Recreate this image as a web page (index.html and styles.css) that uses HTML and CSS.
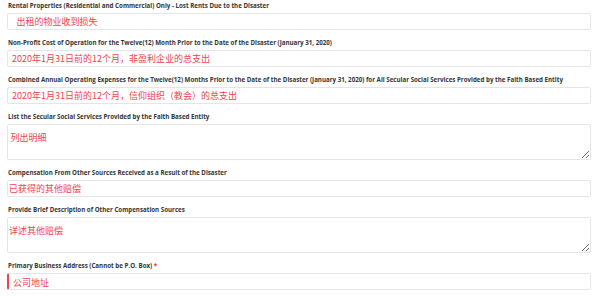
FILE: index.html
```html
<!DOCTYPE html>
<html lang="en">
<head>
    <meta charset="UTF-8">
    <meta name="viewport" content="width=device-width, initial-scale=1.0">
    <title>Disaster Relief Application</title>
    <link rel="stylesheet" href="styles.css">
</head>
<body>
    <form class="relief-form">
        <!-- Rental losses -->
        <div class="field">
            <label class="field-label" for="lost-rents">Rental Properties (Residential and Commercial) Only - Lost Rents Due to the Disaster</label>
            <input class="field-input pad-lg" id="lost-rents" type="text" placeholder="出租的物业收到损失">
        </div>

        <!-- Non-profit operation cost -->
        <div class="field">
            <label class="field-label" for="np-cost">Non-Profit Cost of Operation for the Twelve(12) Month Prior to the Date of the Disaster (January 31, 2020)</label>
            <input class="field-input pad-md" id="np-cost" type="text" placeholder="2020年1月31日前的12个月，非盈利企业的总支出">
        </div>

        <!-- Faith based entity expenses -->
        <div class="field">
            <label class="field-label" for="faith-cost">Combined Annual Operating Expenses for the Twelve(12) Months Prior to the Date of the Disaster (January 31, 2020) for All Secular Social Services Provided by the Faith Based Entity</label>
            <input class="field-input pad-md" id="faith-cost" type="text" placeholder="2020年1月31日前的12个月，信仰组织（教会）的总支出">
        </div>

        <div class="field">
            <label class="field-label" for="faith-services">List the Secular Social Services Provided by the Faith Based Entity</label>
            <textarea class="field-input field-area pad-sm" id="faith-services" placeholder="列出明细"></textarea>
        </div>

        <!-- Other compensation -->
        <div class="field">
            <label class="field-label" for="other-comp">Compensation From Other Sources Received as a Result of the Disaster</label>
            <input class="field-input" id="other-comp" type="text" placeholder="已获得的其他赔偿">
        </div>

        <div class="field">
            <label class="field-label" for="other-comp-desc">Provide Brief Description of Other Compensation Sources</label>
            <textarea class="field-input field-area" id="other-comp-desc" placeholder="详述其他赔偿"></textarea>
        </div>

        <!-- Address (required) -->
        <div class="field">
            <label class="field-label" for="address">Primary Business Address (Cannot be P.O. Box) <span class="required">*</span></label>
            <input class="field-input field-required" id="address" type="text" placeholder="公司地址">
        </div>
    </form>
</body>
</html>
```

FILE: styles.css
```css
/* Basic Styling */
body {
    margin: 0;
    padding: 2px 9px 0 7px;
    background-color: #fff;
    font-family: "Open Sans", "Noto Sans CJK SC", sans-serif;
}
.relief-form {
    display: flex;
    flex-direction: column;
    gap: 9px;
}
.field {
    display: flex;
    flex-direction: column;
    gap: 3px;
}
/* Labels */
.field-label {
    display: block;
    padding-left: 1px;
    font-size: 6.2px;
    line-height: 8px;
    font-weight: 700;
    color: #333;
    white-space: nowrap;
}
.required { color: #e8303f; }
/* Inputs */
.field-input {
    box-sizing: border-box;
    width: 100%;
    height: 17px;
    margin: 0;
    padding: 0 2px 0 1px;
    border: 1.5px solid #e3e5e9;
    border-radius: 2px;
    background-color: #fff;
    font-family: "Noto Sans CJK SC", sans-serif;
    font-size: 9px;
    outline: none;
}
.field-input::placeholder {
    color: #f2414d;
    opacity: 1;
}
.pad-sm { padding-left: 2.5px; }
.pad-md { padding-left: 4px; }
.pad-lg { padding-left: 8.5px; }
.field-area {
    height: 36px;
    padding-top: 5.5px;
    resize: vertical;
}
.field-required {
    border-left: 2.5px solid #f2414d;
    padding-left: 4px;
    padding-top: 2px;
}
```
